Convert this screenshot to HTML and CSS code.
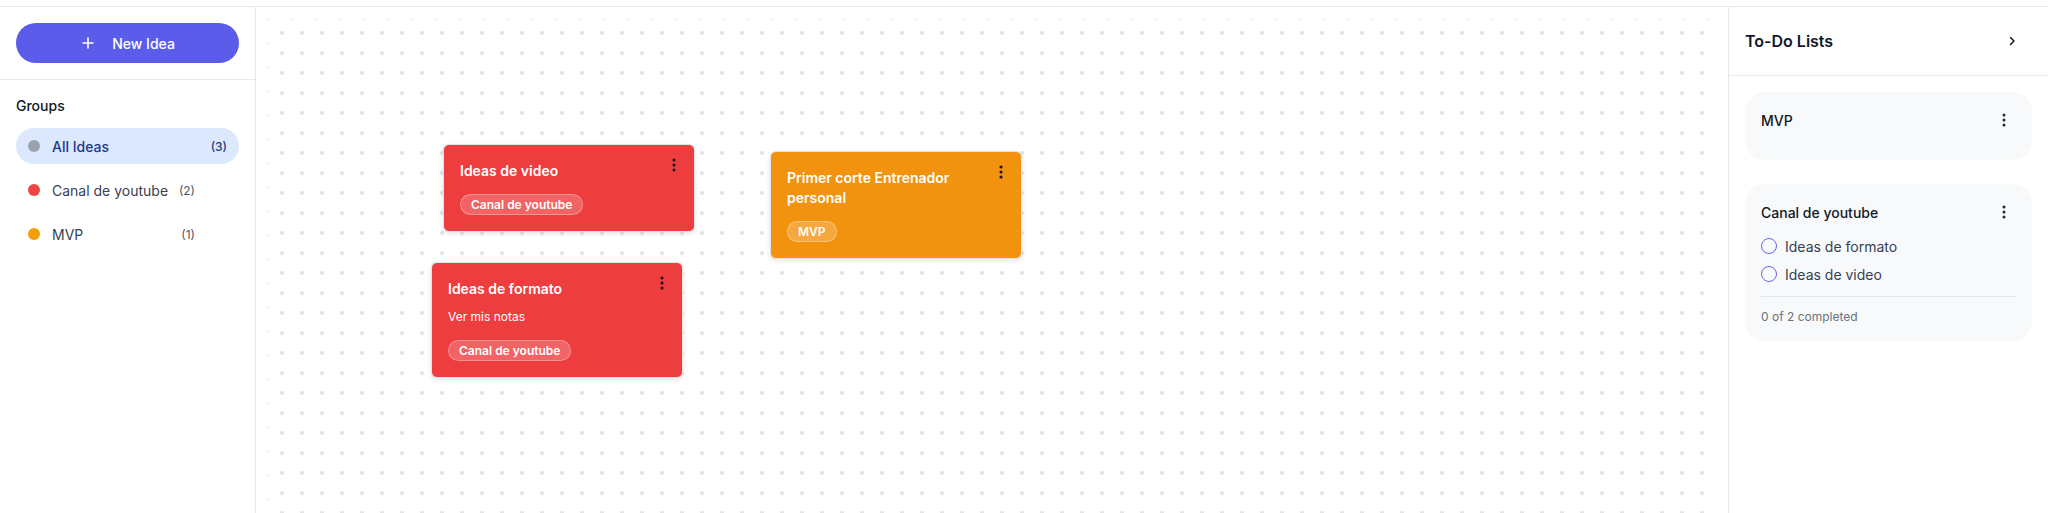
FILE: index.html
```html
<!DOCTYPE html>
<html lang="en">
<head>
<meta charset="utf-8">
<title>Ideas</title>
<link rel="stylesheet" href="styles.css">
</head>
<body>
<div class="topbar"></div>
<div class="app">
  <aside class="sidebar">
    <div class="sidebar-head">
      <button class="new-btn" type="button">
        <svg class="plus" width="16" height="16" viewBox="0 0 16 16"><path d="M8 3v10M3 8h10" stroke="#fff" stroke-width="1.6" stroke-linecap="round" fill="none"/></svg>
        <span>New Idea</span>
      </button>
    </div>
    <div class="groups">
      <div class="groups-title">Groups</div>
      <ul class="group-list">
        <li class="group active"><span class="dot gray"></span><span class="name">All Ideas</span><span class="count">(3)</span></li>
        <li class="group"><span class="dot red"></span><span class="name">Canal de youtube</span><span class="count">(2)</span><span class="menu-slot"></span></li>
        <li class="group"><span class="dot orange"></span><span class="name">MVP</span><span class="count">(1)</span><span class="menu-slot"></span></li>
      </ul>
    </div>
  </aside>

  <main class="canvas">
    <div class="board">
      <div class="idea red" style="left:171px;top:121px">
        <h3 class="idea-title">Ideas de video</h3>
        <span class="tag">Canal de youtube</span>
        <button class="kebab" type="button"><svg width="24" height="24" viewBox="0 0 24 24"><circle cx="12" cy="7" r="1.5"/><circle cx="12" cy="12" r="1.5"/><circle cx="12" cy="17" r="1.5"/></svg></button>
      </div>
      <div class="idea red" style="left:159px;top:239px">
        <h3 class="idea-title">Ideas de formato</h3>
        <p class="idea-desc">Ver mis notas</p>
        <span class="tag">Canal de youtube</span>
        <button class="kebab" type="button"><svg width="24" height="24" viewBox="0 0 24 24"><circle cx="12" cy="7" r="1.5"/><circle cx="12" cy="12" r="1.5"/><circle cx="12" cy="17" r="1.5"/></svg></button>
      </div>
      <div class="idea orange" style="left:498px;top:128px">
        <h3 class="idea-title">Primer corte Entrenador personal</h3>
        <span class="tag">MVP</span>
        <button class="kebab" type="button"><svg width="24" height="24" viewBox="0 0 24 24"><circle cx="12" cy="7" r="1.5"/><circle cx="12" cy="12" r="1.5"/><circle cx="12" cy="17" r="1.5"/></svg></button>
      </div>
    </div>
  </main>

  <aside class="todo">
    <div class="todo-head">
      <h2 class="todo-title">To-Do Lists</h2>
      <button class="chev" type="button"><svg width="16" height="16" viewBox="0 0 16 16"><path d="M6.5 4.5l3.5 3.5-3.5 3.5" stroke="#111827" stroke-width="1.5" fill="none" stroke-linecap="round" stroke-linejoin="round"/></svg></button>
    </div>
    <div class="todo-body">
      <section class="todo-card">
        <div class="todo-card-head">
          <span>MVP</span>
          <button class="kebab-sm" type="button"><svg width="24" height="24" viewBox="0 0 24 24"><circle cx="12" cy="7" r="1.5"/><circle cx="12" cy="12" r="1.5"/><circle cx="12" cy="17" r="1.5"/></svg></button>
        </div>
        <div class="todo-empty"></div>
      </section>
      <section class="todo-card">
        <div class="todo-card-head">
          <span>Canal de youtube</span>
          <button class="kebab-sm" type="button"><svg width="24" height="24" viewBox="0 0 24 24"><circle cx="12" cy="7" r="1.5"/><circle cx="12" cy="12" r="1.5"/><circle cx="12" cy="17" r="1.5"/></svg></button>
        </div>
        <ul class="todo-items">
          <li class="todo-item"><span class="circle"></span>Ideas de formato</li>
          <li class="todo-item"><span class="circle"></span>Ideas de video</li>
        </ul>
        <div class="todo-foot">0 of 2 completed</div>
      </section>
    </div>
  </aside>
</div>
</body>
</html>
```

FILE: styles.css
```css
* { box-sizing: border-box; }
html, body {
  margin: 0;
  padding: 0;
  background: #fff;
  font-family: Inter, "Noto Sans", "Liberation Sans", sans-serif;
  color: #111827;
  height: 513px;
  overflow: hidden;
}
button { font-family: inherit; cursor: pointer; }
h2, h3, p { margin: 0; }

.topbar {
  height: 7px;
  border-bottom: 1px solid #e5e7eb;
}
.app {
  display: flex;
  height: 506px;
}

/* Sidebar */
.sidebar {
  width: 256px;
  flex: none;
  border-right: 1px solid #e5e7eb;
}
.sidebar-head {
  padding: 16px;
  border-bottom: 1px solid #e5e7eb;
}
.new-btn {
  width: 100%;
  height: 40px;
  border: 0;
  border-radius: 999px;
  background: #5b5ce9;
  color: #fff;
  display: flex;
  align-items: center;
  justify-content: center;
  gap: 16px;
  font-size: 14px;
  font-weight: 500;
}
.groups { padding: 16px; }
.groups-title {
  font-size: 14px;
  line-height: 20px;
  font-weight: 500;
  color: #111827;
  margin-bottom: 12px;
}
.group-list {
  list-style: none;
  margin: 0;
  padding: 0;
  display: flex;
  flex-direction: column;
  gap: 8px;
}
.group {
  display: flex;
  align-items: center;
  gap: 12px;
  height: 36px;
  padding: 0 12px;
  border-radius: 999px;
  font-size: 14px;
  color: #374151;
  white-space: nowrap;
}
.group.active {
  background: #dbe8fd;
  color: #1e3a8a;
  font-weight: 500;
}
.dot {
  width: 12px;
  height: 12px;
  border-radius: 50%;
  flex: none;
}
.dot.gray { background: #9ca3af; }
.dot.red { background: #ef4444; }
.dot.orange { background: #f59e0b; }
.name { flex: 1 1 auto; min-width: 0; }
.count {
  flex: none;
  font-size: 12px;
  color: #4b5563;
}
.group.active .count { color: #1e3a8a; }
.menu-slot { flex: none; width: 20px; visibility: hidden; }

/* Canvas */
.canvas {
  flex: 1;
  padding: 16px;
  overflow: hidden;
  background-color: #fff;
  background-image: radial-gradient(circle, #f0f1f4 1px, transparent 1.6px);
  background-size: 24px 24px;
}
.board {
  position: relative;
  height: 600px;
  background-color: #fff;
  background-image: radial-gradient(circle, #e2e4ea 1.7px, transparent 2.3px);
  background-size: 20px 20px;
}
.idea {
  position: absolute;
  width: 252px;
  padding: 16px;
  border: 1px solid #e1e3e8;
  border-radius: 6px;
  color: #fff;
  box-shadow: 0 2px 5px rgba(17, 24, 39, 0.10);
}
.idea.red { background: #ee3d3e; }
.idea.orange { background: #f2930f; }
.idea-title {
  font-size: 14px;
  line-height: 20px;
  font-weight: 600;
  padding-right: 24px;
}
.idea-desc {
  margin-top: 8px;
  font-size: 12px;
  line-height: 20px;
}
.tag {
  display: inline-block;
  margin-top: 13px;
  height: 21px;
  padding: 0 10px;
  border-radius: 999px;
  background: rgba(255, 255, 255, 0.2);
  border: 1px solid rgba(255, 255, 255, 0.3);
  font-size: 12px;
  line-height: 19px;
  font-weight: 600;
}
.kebab {
  position: absolute;
  top: 8px;
  right: 8px;
  width: 24px;
  height: 24px;
  padding: 0;
  border: 0;
  background: none;
  fill: #111;
}
.kebab svg, .kebab-sm svg, .chev svg { display: block; }

/* To-do panel */
.todo {
  width: 320px;
  flex: none;
  border-left: 1px solid #e5e7eb;
}
.todo-head {
  height: 69px;
  border-bottom: 1px solid #e5e7eb;
  display: flex;
  align-items: center;
  justify-content: space-between;
  padding: 0 24px 0 16px;
}
.todo-title {
  font-size: 16px;
  font-weight: 600;
  color: #111827;
}
.chev {
  width: 24px;
  height: 24px;
  border: 0;
  padding: 4px;
  background: none;
}
.todo-body {
  padding: 16px;
  display: flex;
  flex-direction: column;
  gap: 24px;
}
.todo-card {
  background: #f8f9fa;
  border-radius: 20px;
  padding: 16px;
}
.todo-card-head {
  display: flex;
  align-items: center;
  justify-content: space-between;
  height: 24px;
  font-size: 14px;
  font-weight: 500;
  color: #111827;
}
.kebab-sm {
  width: 24px;
  height: 24px;
  padding: 0;
  border: 0;
  background: none;
  fill: #1f2937;
}
.todo-empty { height: 12px; }
.todo-items {
  list-style: none;
  margin: 8px 0 0;
  padding: 0;
}
.todo-item {
  display: flex;
  align-items: center;
  gap: 8px;
  height: 28px;
  font-size: 14px;
  color: #374151;
}
.circle {
  width: 16px;
  height: 16px;
  border-radius: 50%;
  border: 1.5px solid #6366f1;
  flex: none;
}
.todo-foot {
  margin-top: 8px;
  border-top: 1px solid #e5e7eb;
  padding-top: 12px;
  font-size: 12px;
  line-height: 16px;
  color: #6b7280;
}
```
